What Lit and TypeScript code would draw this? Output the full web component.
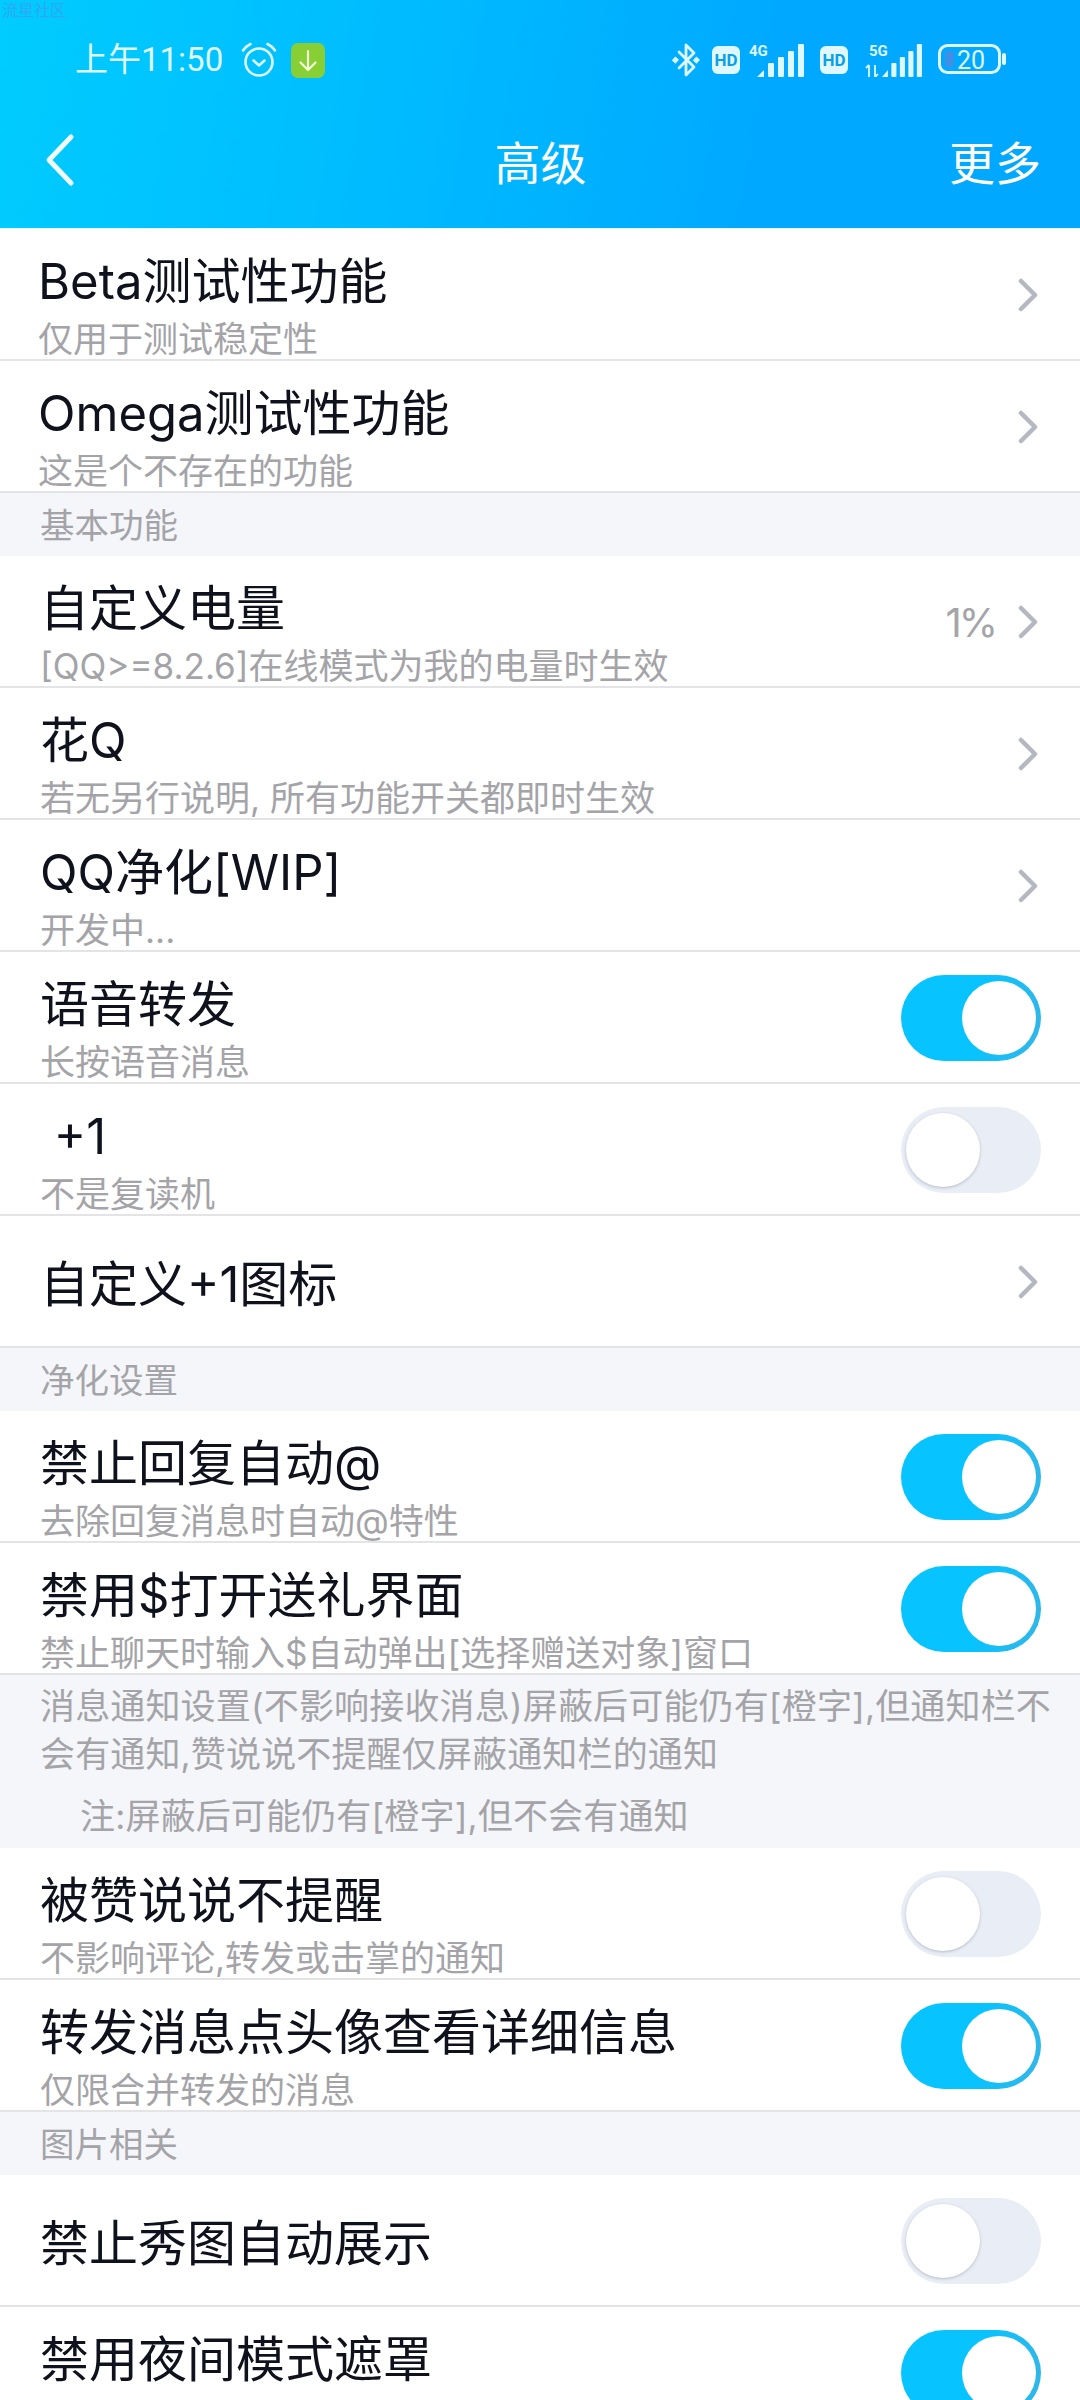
import { LitElement, html, css, svg, nothing } from 'lit'
import { customElement } from 'lit/decorators.js'

type Row = {
	title: string
	sub?: string
	value?: string
	toggle?: boolean
	top?: boolean
}

type Block = { section?: string; notice?: boolean; rows?: Row[] }

const BLOCKS: Block[] = [
	{
		rows: [
			{ title: 'Beta测试性功能', sub: '仅用于测试稳定性' },
			{ title: 'Omega测试性功能', sub: '这是个不存在的功能' },
		],
	},
	{
		section: '基本功能',
		rows: [
			{ title: '自定义电量', sub: '[QQ>=8.2.6]在线模式为我的电量时生效', value: '1%' },
			{ title: '花Q', sub: '若无另行说明, 所有功能开关都即时生效' },
			{ title: 'QQ净化[WIP]', sub: '开发中...' },
			{ title: '语音转发', sub: '长按语音消息', toggle: true },
			{ title: '\u00a0+1', sub: '不是复读机', toggle: false },
			{ title: '自定义+1图标' },
		],
	},
	{
		section: '净化设置',
		rows: [
			{ title: '禁止回复自动@', sub: '去除回复消息时自动@特性', toggle: true },
			{ title: '禁用$打开送礼界面', sub: '禁止聊天时输入$自动弹出[选择赠送对象]窗口', toggle: true },
		],
	},
	{
		notice: true,
		rows: [
			{ title: '被赞说说不提醒', sub: '不影响评论,转发或击掌的通知', toggle: false },
			{ title: '转发消息点头像查看详细信息', sub: '仅限合并转发的消息', toggle: true },
		],
	},
	{
		section: '图片相关',
		rows: [
			{ title: '禁止秀图自动展示', toggle: false },
			{ title: '禁用夜间模式遮罩', toggle: true, top: true },
		],
	},
]

const BARS = svg`
	<path d="M0 34l7-7v7z" />
	<rect x="11" y="20" width="6" height="14" rx="1" />
	<rect x="21" y="14" width="6" height="20" rx="1" />
	<rect x="31" y="8" width="6" height="26" rx="1" />
	<rect x="41" y="1" width="6" height="33" rx="1" />
`

@customElement('app-root')
export class AppRoot extends LitElement {
	static styles = css`
		:host {
			display: block;
			width: 1080px;
			height: 2400px;
			overflow: hidden;
			position: relative;
			background: #fff;
			font-family: Inter, 'Noto Sans CJK SC', 'Noto Sans', sans-serif;
			color: #0f121c;
		}

		.watermark {
			position: absolute;
			left: 2px;
			top: 1px;
			font-size: 16px;
			line-height: 18px;
			color: #3f9cf0;
			opacity: 0.75;
		}

		.header {
			height: 228px;
			background: linear-gradient(100deg, #00ccff 0%, #00bcff 35%, #00a9ff 70%, #00a8ff 100%);
			color: #fff;
			border-bottom: 1px solid #e8fbff;
		}

		.status {
			height: 118px;
			box-sizing: border-box;
			padding: 2px 74px 0 75px;
			display: flex;
			align-items: center;
			color: #dff8ff;
		}

		.time {
			font-family: Roboto, 'Noto Sans CJK SC', sans-serif;
			font-size: 33px;
			line-height: 44px;
			margin-right: 18px;
			white-space: nowrap;
		}

		.status-right {
			margin-left: auto;
			display: flex;
			align-items: center;
		}

		.status svg {
			display: block;
		}

		.nav {
			height: 83px;
			display: grid;
			grid-template-columns: 1fr auto 1fr;
			align-items: center;
			padding: 0 39px 0 40px;
			font-size: 46px;
		}

		.nav svg {
			margin-left: 4px;
		}

		.nav .more {
			justify-self: end;
		}

		.row {
			height: 132px;
			box-sizing: border-box;
			padding: 21px 39px 0 40px;
			display: flex;
			align-items: flex-start;
			border-bottom: 2px solid #e4e4e6;
		}

		.row.plain {
			align-items: center;
			padding-top: 0;
		}

		.row.plain .title {
			margin-top: 7px;
		}

		.row.wide {
			padding-left: 38px;
		}

		.text {
			flex: 1;
			min-width: 0;
		}

		.title {
			font-size: 49px;
			line-height: 64px;
			white-space: nowrap;
		}

		.sub {
			font-size: 35px;
			line-height: 50px;
			color: #a4a4a8;
			white-space: nowrap;
		}

		.side {
			align-self: stretch;
			margin-top: -21px;
			padding-top: 2px;
			display: flex;
			align-items: center;
		}

		.row.plain .side {
			margin-top: 0;
		}

		.value {
			font-size: 40px;
			letter-spacing: -3px;
			color: #a5a5a8;
			margin-right: 23px;
		}

		.chevron {
			display: block;
			margin-right: 3px;
		}

		.section {
			height: 63px;
			box-sizing: border-box;
			padding: 0 0 3px 40px;
			display: flex;
			align-items: center;
			background: #f4f6fa;
			font-size: 34.5px;
			color: #a4a4a8;
		}

		.notice {
			height: 173px;
			box-sizing: border-box;
			padding: 7px 20px 0 40px;
			background: #f4f6fa;
			font-size: 35px;
			line-height: 48px;
			letter-spacing: 0.15px;
			color: #a4a4a8;
			white-space: nowrap;
		}

		.notice .note {
			margin-top: 14px;
			padding-left: 40px;
		}

		.toggle {
			width: 140px;
			height: 86px;
			border-radius: 43px;
			box-sizing: border-box;
			padding: 6px 5px;
			display: flex;
			background: #e9edf5;
			justify-content: flex-start;
		}

		.toggle.on {
			background: linear-gradient(100deg, #07c3ff 55%, #35b5e6 100%);
			justify-content: flex-end;
		}

		.knob {
			width: 74px;
			height: 74px;
			border-radius: 50%;
			background: #fff;
			box-shadow: 0 1px 3px rgba(90, 95, 120, 0.35);
		}

		.toggle.on .knob {
			box-shadow: none;
		}
	`

	renderRow(row: Row, wide: boolean) {
		const plain = !row.sub && !row.top
		return html`
			<div class="row ${plain ? 'plain' : ''} ${wide ? 'wide' : ''}">
				<div class="text">
					<div class="title">${row.title}</div>
					${row.sub ? html`<div class="sub">${row.sub}</div>` : nothing}
				</div>
				<div class="side">
					${row.value ? html`<span class="value">${row.value}</span>` : nothing}
					${row.toggle === undefined
						? html`<svg class="chevron" width="20" height="34" viewBox="0 0 20 34" fill="none">
								<path d="M3 3l14 14L3 31" stroke="#b5b7c1" stroke-width="4.5" stroke-linecap="round" stroke-linejoin="round" />
							</svg>`
						: html`<div class="toggle ${row.toggle ? 'on' : ''}"><div class="knob"></div></div>`}
				</div>
			</div>
		`
	}

	renderStatus() {
		const hd = html`<svg width="28" height="28" viewBox="0 0 28 28">
			<rect width="28" height="28" rx="6" fill="#dff8ff" />
			<text x="14" y="20" text-anchor="middle" font-family="Roboto, sans-serif" font-size="17" font-weight="700" fill="#0a9fe8">HD</text>
		</svg>`
		return html`
			<div class="status">
				<span class="time">上午11:50</span>
				<svg width="36" height="36" viewBox="0 0 36 36" fill="none" stroke="#dff8ff" stroke-width="2.6" stroke-linecap="round" stroke-linejoin="round">
					<circle cx="18" cy="20" r="13.5" />
					<path d="M12.5 18.5l5.5 5 5.5-5" />
					<path d="M2 8.5C4 5.5 6.5 3.5 9.5 2M34 8.5C32 5.5 29.5 3.5 26.5 2" />
				</svg>
				<svg style="margin-left:14px" width="34" height="35" viewBox="0 0 34 35" fill="none">
					<rect width="34" height="35" rx="7" fill="#88cf35" />
					<path d="M17 8v19M9.5 19.5L17 27l7.5-7.5" stroke="#f4ffd8" stroke-width="2.2" stroke-linecap="round" stroke-linejoin="round" />
				</svg>
				<div class="status-right">
					<svg width="30" height="36" viewBox="0 0 30 36" fill="none" stroke="#dff8ff" stroke-width="2.8" stroke-linejoin="round" stroke-linecap="round">
						<path d="M8 10l15 15-8 8V3l8 8L8 26" />
						<path d="M1.5 18l3-3 3 3-3 3zM22.5 18l3-3 3 3-3 3z" fill="#dff8ff" stroke-width="1" />
					</svg>
					<span style="margin-left:11px">${hd}</span>
					<svg style="margin-left:9px" width="56" height="34" viewBox="0 0 56 34" fill="#dff8ff">
						<text x="0" y="13" font-family="Roboto, sans-serif" font-size="15" font-weight="700">4G</text>
						<g transform="translate(8 0)">${BARS}</g>
					</svg>
					<span style="margin-left:15px">${hd}</span>
					<svg style="margin-left:17px" width="57" height="34" viewBox="0 0 57 34" fill="#dff8ff">
						<text x="4" y="13" font-family="Roboto, sans-serif" font-size="15" font-weight="700">5G</text>
						<path d="M4 34V22M1 25l3-3M10 22v12M13 31l-3 3" stroke="#dff8ff" stroke-width="1.8" fill="none" />
						<g transform="translate(17 0) scale(0.85 1)">${BARS}</g>
					</svg>
					<svg style="margin-left:16px" width="68" height="32" viewBox="0 0 68 32" fill="none">
						<rect x="1.5" y="1.5" width="60" height="27" rx="8" stroke="#dff8ff" stroke-width="3" />
						<rect x="7" y="7" width="9" height="16" rx="2" fill="#3e8fe6" />
						<text x="33" y="25" text-anchor="middle" font-family="Roboto, sans-serif" font-size="25" fill="#dff8ff">20</text>
						<rect x="64" y="9" width="4" height="12" rx="2" fill="#dff8ff" />
					</svg>
				</div>
			</div>
		`
	}

	render() {
		return html`
			<div class="header">
				${this.renderStatus()}
				<div class="nav">
					<svg width="34" height="54" viewBox="0 0 34 54" fill="none">
						<path d="M27 4L5 27l22 23" stroke="#f0fcff" stroke-width="5" stroke-linecap="round" stroke-linejoin="round" />
					</svg>
					<span>高级</span>
					<span class="more">更多</span>
				</div>
			</div>
			<div class="watermark">流星社区</div>
			${BLOCKS.map(
				(block, b) => html`
					${block.section ? html`<div class="section">${block.section}</div>` : nothing}
					${block.notice
						? html`<div class="notice">
								消息通知设置(不影响接收消息)屏蔽后可能仍有[橙字],但通知栏不<br />会有通知,赞说说不提醒仅屏蔽通知栏的通知
								<div class="note">注:屏蔽后可能仍有[橙字],但不会有通知</div>
							</div>`
						: nothing}
					${block.rows?.map((r) => this.renderRow(r, b === 0))}
				`
			)}
		`
	}
}
